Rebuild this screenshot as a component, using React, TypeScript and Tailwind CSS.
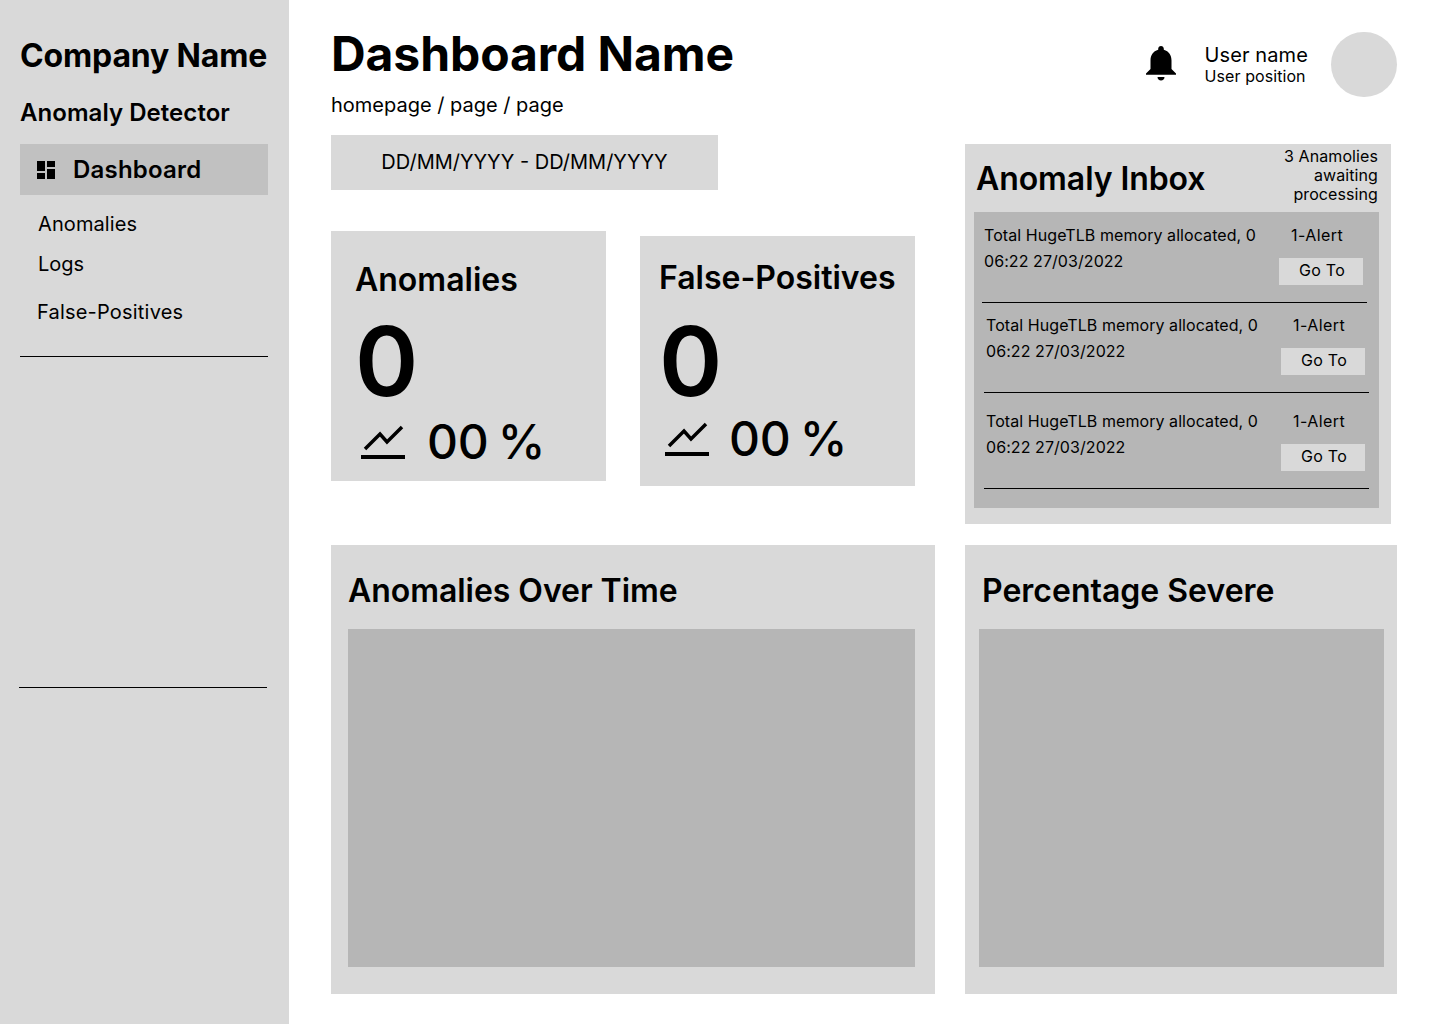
import React from "react";

function DashIcon() {
  return (
    <svg className="ml-[14px] h-[24px] w-[24px] shrink-0" viewBox="0 0 24 24" fill="#000">
      <path d="M3 13h8V3H3v10zm0 8h8v-6H3v6zm10 0h8V11h-8v10zm0-18v6h8V3h-8z" />
    </svg>
  );
}

function Bell() {
  return (
    <svg className="mb-[2px] h-[36px] w-[32px] shrink-0" viewBox="0 0 32 36" fill="#000">
      <path d="M16 0c1.6 0 2.8 1.2 2.8 2.8v1C24 5.2 26.5 9.5 26.5 14.500v8.500l4.500 4.500v1.200H1v-1.200l4.500-4.500v-8.500C5.500 9.500 8 5.200 13.200 3.800v-1C13.200 1.200 14.400 0 16 0z" />
      <path d="M12.500 31h7c0 2-1.500 3.500-3.500 3.500s-3.500-1.500-3.500-3.500z" />
    </svg>
  );
}

function Trend() {
  return (
    <svg className="h-[40px] w-[46px] shrink-0" viewBox="0 0 46 40" fill="none" stroke="#000" strokeWidth="3.500">
      <path d="M5 27 L20 12 L27 20 L42 5" />
      <path d="M1 35 H45" strokeWidth="4" />
    </svg>
  );
}

function StatCard({ title, cls, zeroCls, statCls, numCls }: { title: string; cls: string; zeroCls: string; statCls: string; numCls: string }) {
  return (
    <div className={`h-[250px] w-[275px] bg-[#d9d9d9] ${cls}`}>
      <div className="text-[32px] leading-[40px] font-semibold">{title}</div>
      <div className={`text-[96px] leading-[100px] font-semibold ${zeroCls}`}>0</div>
      <div className={`flex items-center ${statCls}`}>
        <Trend />
        <span className={`text-[48px] leading-[58px] font-medium tracking-[-0.3px] [word-spacing:-3px] whitespace-nowrap ${numCls}`}>00 %</span>
      </div>
    </div>
  );
}

function InboxRow({ cls, textCls }: { cls: string; textCls: string }) {
  return (
    <div className={`flex w-[385px] border-b border-black text-[16px] leading-[26px] tracking-[0.07px] ${cls}`}>
      <div className={`w-[297px] shrink-0 ${textCls}`}>
        <div className="whitespace-nowrap">Total HugeTLB memory allocated, 0</div>
        <div>06:22 27/03/2022</div>
      </div>
      <div className="w-[84px]">
        <div className="pl-[12px] tracking-[0.45px]">1-Alert</div>
        <div className="mt-[10px] flex h-[27px] items-center justify-center bg-[#d9d9d9] pb-[3px] pl-[2px] tracking-[0.25px]">Go To</div>
      </div>
    </div>
  );
}

function ChartPanel({ title, cls, innerCls, titleCls }: { title: string; cls: string; innerCls: string; titleCls: string }) {
  return (
    <div className={`h-[449px] bg-[#d9d9d9] pt-[26px] ${cls}`}>
      <div className={`text-[32px] leading-[40px] font-semibold ${titleCls}`}>{title}</div>
      <div className={`mt-[18px] h-[338px] bg-[#b6b6b6] ${innerCls}`} />
    </div>
  );
}

export default function App() {
  return (
    <div className="flex h-[1024px] w-[1440px] overflow-hidden bg-white text-black" style={{ fontFamily: "Inter, sans-serif" }}>
      <aside className="h-full w-[289px] shrink-0 bg-[#d9d9d9] pt-[36px]">
        <div className="pl-[20px] text-[32px] leading-[40px] font-bold tracking-[-0.15px] whitespace-nowrap">Company Name</div>
        <div className="mt-[21px] pl-[20px] text-[24px] leading-[32px] font-semibold tracking-[0.05px]">Anomaly Detector</div>
        <div className="mt-[15px] ml-[20px] flex h-[51px] w-[248px] items-center bg-[#c1c1c1] text-[24px] font-semibold">
          <DashIcon />
          <span className="ml-[15px] tracking-[0.2px]">Dashboard</span>
        </div>
        <div className="mt-[17px] pl-[38px] text-[20px] leading-[24px] tracking-[0.1px]">Anomalies</div>
        <div className="mt-[16px] pl-[38px] text-[20px] leading-[24px]">Logs</div>
        <div className="mt-[24px] pl-[37px] text-[20px] leading-[24px] tracking-[0.2px]">False-Positives</div>
        <div className="mt-[32px] ml-[20px] h-px w-[248px] bg-black" />
        <div className="mt-[330px] ml-[19px] h-px w-[248px] bg-black" />
      </aside>

      <main className="w-[1151px] pl-[42px]">
        <div className="flex h-[545px]">
          <div className="w-[634px] shrink-0 pt-[25px]">
            <div className="text-[48px] leading-[58px] font-bold tracking-[-0.08px]">Dashboard Name</div>
            <div className="mt-[10px] text-[20px] leading-[24px]">homepage / page / page</div>
            <div className="mt-[18px] flex h-[55px] w-[387px] items-center justify-center bg-[#d9d9d9] pb-[1px] text-[20px]">DD/MM/YYYY - DD/MM/YYYY</div>
            <div className="mt-[41px] flex gap-[34px]">
              <StatCard title="Anomalies" cls="pl-[24px] pt-[29px]" zeroCls="mt-[11px]" statCls="mt-[2px] ml-[5px]" numCls="ml-[21px]" />
              <StatCard title="False-Positives" cls="mt-[5px] pl-[19px] pt-[22px]" zeroCls="mt-[13px]" statCls="-mt-[1px] ml-[5px]" numCls="ml-[19px]" />
            </div>
          </div>
          <div className="w-[432px] shrink-0 pt-[32px]">
            <div className="flex h-[65px] items-center justify-end">
              <Bell />
              <div className="ml-[28px] pb-[2px]">
                <div className="text-[20px] leading-[24px] tracking-[0.1px]">User name</div>
                <div className="text-[16px] leading-[18px] tracking-[0.07px]">User position</div>
              </div>
              <div className="ml-[23px] h-[65px] w-[66px] rounded-full bg-[#d9d9d9]" />
            </div>
            <div className="mt-[47px] h-[380px] w-[426px] bg-[#d9d9d9]">
              <div className="flex h-[68px] justify-between pl-[11px] pr-[13px]">
                <div className="pt-[15px] text-[32px] leading-[40px] font-semibold tracking-[-0.08px]">Anomaly Inbox</div>
                <div className="w-[120px] pt-[3px] text-right text-[16px] leading-[19px] tracking-[0.09px]">3 Anamolies awaiting processing</div>
              </div>
              <div className="ml-[9px] h-[296px] w-[405px] bg-[#b6b6b6]">
                <InboxRow cls="ml-[8px] h-[91px] pt-[10px]" textCls="pl-[2px]" />
                <InboxRow cls="ml-[10px] h-[90px] pt-[9px]" textCls="pl-[2px]" />
                <InboxRow cls="ml-[10px] h-[96px] pt-[15px]" textCls="pl-[2px]" />
              </div>
            </div>
          </div>
        </div>
        <div className="flex gap-[30px]">
          <ChartPanel title="Anomalies Over Time" cls="w-[604px]" titleCls="pl-[17px] tracking-[-0.05px]" innerCls="ml-[17px] w-[567px]" />
          <ChartPanel title="Percentage Severe" cls="w-[432px]" titleCls="pl-[17px]" innerCls="ml-[14px] w-[405px]" />
        </div>
      </main>
    </div>
  );
}
